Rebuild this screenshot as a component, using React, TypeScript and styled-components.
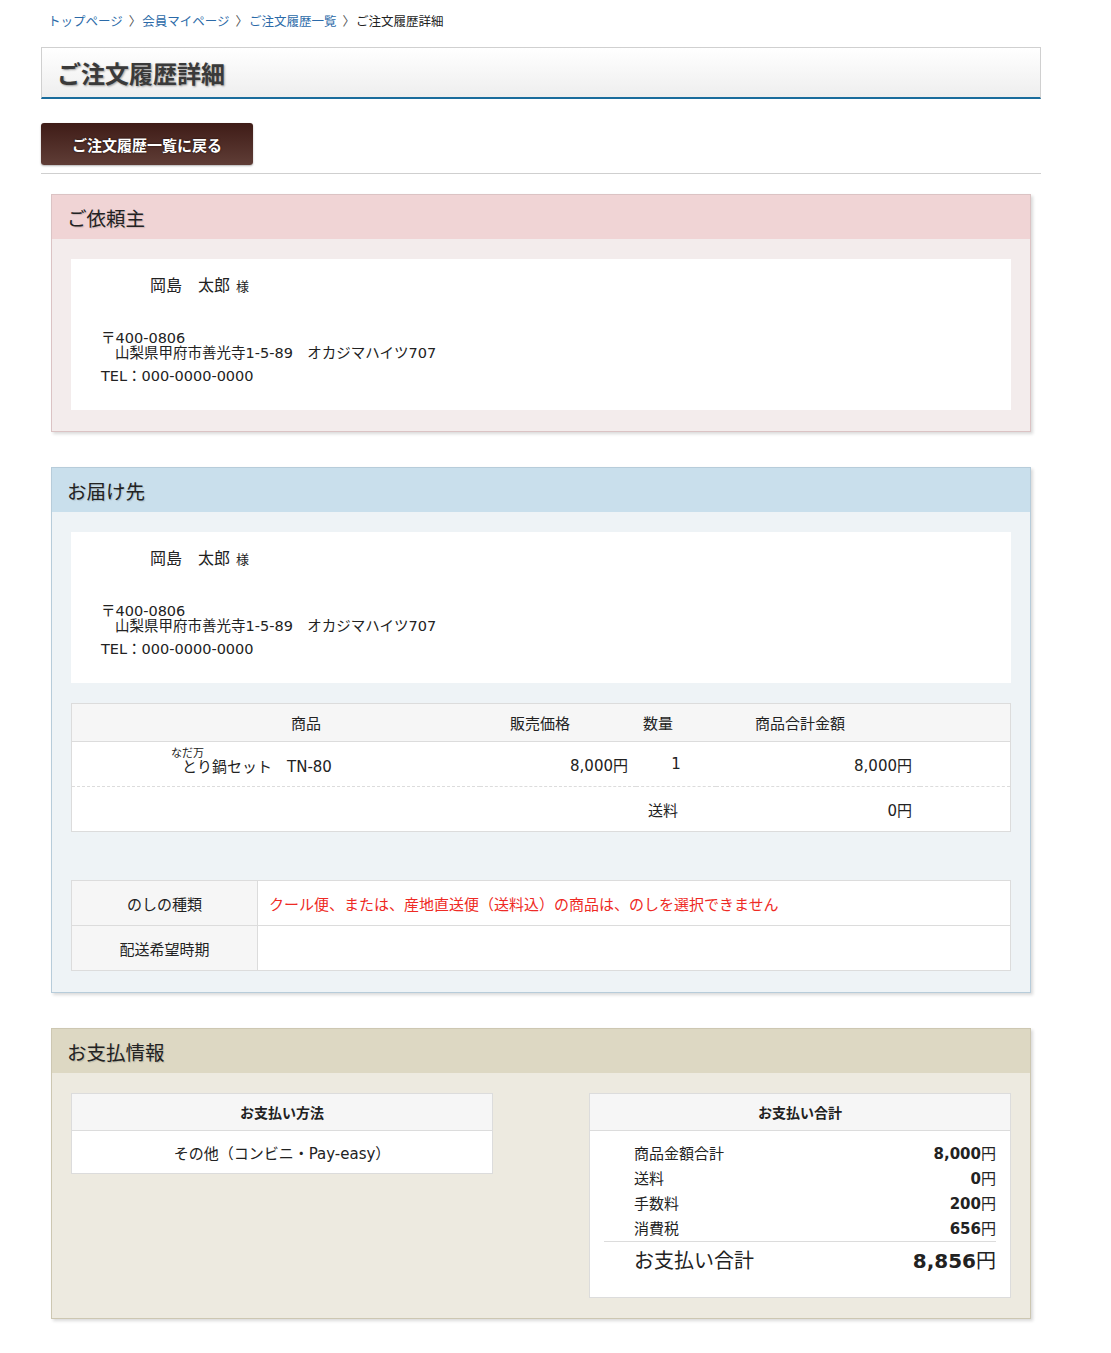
import React from "react"
import styled, { createGlobalStyle } from "styled-components"

const GlobalStyle = createGlobalStyle`
	body {
		margin: 0;
		background: #fff;
		color: #222;
		font-family: "DejaVu Sans", "Noto Sans CJK JP", sans-serif;
	}
`

const Page = styled.div`
	width: 1000px;
	margin-left: 41px;
	padding-bottom: 35px;
`

const Breadcrumb = styled.nav`
	display: flex;
	align-items: center;
	height: 41px;
	padding-left: 7px;
	font-family: "Noto Sans CJK JP", sans-serif;
	font-size: 12.5px;
	line-height: 16px;
	a {
		color: #2b6aa8;
		text-decoration: none;
	}
	span.sep {
		color: #555;
		margin: 0 1px 0 6px;
	}
	span.current {
		color: #222;
	}
`

const TitleBox = styled.h1`
	margin: 6px 0 0;
	height: 49px;
	display: flex;
	align-items: center;
	padding-left: 15px;
	border: 1px solid #d0d0d0;
	border-bottom: 2px solid #1a6c9c;
	background: linear-gradient(#ffffff, #eeeeee);
	font-family: "Noto Sans CJK JP", sans-serif;
	font-size: 24px;
	font-weight: bold;
	color: #3a3a3a;
	text-shadow: 1px 1px 2px rgba(0, 0, 0, 0.35);
`

const BackButton = styled.button`
	margin-top: 24px;
	width: 212px;
	height: 42px;
	border: none;
	border-radius: 3px;
	background: linear-gradient(#3f1c17, #5f3d36);
	color: #fff;
	font-family: "Noto Sans CJK JP", sans-serif;
	font-size: 15px;
	font-weight: bold;
	text-shadow: 0 0 2px rgba(0, 0, 0, 0.8);
	box-shadow: 0 1px 2px rgba(0, 0, 0, 0.3);
	cursor: pointer;
`

const Rule = styled.hr`
	margin: 8px 0 20px;
	border: none;
	border-top: 1px solid #cfcfcf;
`

type Tone = "pink" | "blue" | "tan"
const tones: Record<Tone, { head: string, body: string, border: string }> = {
	pink: { head: "#f0d4d5", body: "#f3ecec", border: "#dbc3c4" },
	blue: { head: "#c9dfec", body: "#eef3f6", border: "#b7ccda" },
	tan: { head: "#ddd8c3", body: "#edeae0", border: "#cdc7b2" },
}

const Section = styled.section<{ $tone: Tone }>`
	margin: 0 10px 35px;
	border: 1px solid ${p => tones[p.$tone].border};
	background: ${p => tones[p.$tone].body};
	box-shadow: 2px 2px 3px rgba(0, 0, 0, 0.15);
	> h2 {
		margin: 0;
		height: 44px;
		display: flex;
		align-items: center;
		padding-left: 15px;
		background: ${p => tones[p.$tone].head};
		font-family: "Noto Sans CJK JP", sans-serif;
		font-size: 19.5px;
		font-weight: normal;
		color: #222;
		text-shadow: 1px 1px 1px rgba(0, 0, 0, 0.15);
	}
`

const SectionBody = styled.div`
	padding: 20px 19px 21px;
	display: flex;
	flex-direction: column;
`

const AddressCard = styled.div`
	background: #fff;
	padding: 17px 30px 24px;
	font-size: 14.5px;
	color: #222;
`

const Name = styled.div`
	padding-left: 49px;
	font-size: 16px;
	line-height: 20px;
	small {
		font-size: 13px;
		margin-left: 6px;
	}
`

const Postal = styled.div`
	margin-top: 34px;
	line-height: 15px;
	div + div {
		padding-left: 14px;
	}
`

const Tel = styled.div`
	margin-top: 5px;
	line-height: 20px;
`

const ItemTable = styled.div`
	margin-top: 20px;
	border: 1px solid #dcdcdc;
	background: #fff;
	display: grid;
	grid-template-columns: 408px 156px 80px 204px 1fr;
	font-size: 15px;
`

const HeadCell = styled.div<{ $shift?: number }>`
	height: 37px;
	display: flex;
	align-items: center;
	justify-content: center;
	background: #f6f6f6;
	border-bottom: 1px solid #dcdcdc;
	padding-left: ${p => Math.max(p.$shift ?? 0, 0)}px;
	padding-right: ${p => Math.max(-(p.$shift ?? 0), 0)}px;
`

const Cell = styled.div<{ $align?: "left" | "center" | "right", $dashed?: boolean, $span?: string, $padRight?: number }>`
	height: 44px;
	display: flex;
	flex-direction: column;
	justify-content: center;
	align-items: ${p => p.$align === "right" ? "flex-end" : p.$align === "center" ? "center" : "flex-start"};
	padding: 0 ${p => p.$padRight ?? 8}px 0 8px;
	border-bottom: ${p => p.$dashed ? "1px dashed #dcdcdc" : "none"};
	grid-column: ${p => p.$span ?? "auto"};
`

const Product = styled.div`
	padding-left: 91px;
	line-height: 15px;
	small {
		display: block;
		font-size: 11px;
		line-height: 12px;
		margin-top: -6px;
	}
	span {
		display: block;
		padding-left: 11px;
		font-size: 15px;
	}
`

const InfoTable = styled.div`
	margin-top: 48px;
	border: 1px solid #dcdcdc;
	display: grid;
	grid-template-columns: 186px 1fr;
	font-size: 15px;
`

const InfoLabel = styled.div<{ $last?: boolean }>`
	height: 44px;
	display: flex;
	align-items: center;
	justify-content: center;
	background: #f6f6f6;
	border-right: 1px solid #dcdcdc;
	border-bottom: ${p => p.$last ? "none" : "1px solid #dcdcdc"};
`

const InfoValue = styled.div<{ $last?: boolean, $warn?: boolean }>`
	height: 44px;
	display: flex;
	align-items: center;
	padding-left: 11px;
	background: #fff;
	color: ${p => p.$warn ? "#ee2a24" : "#222"};
	border-bottom: ${p => p.$last ? "none" : "1px solid #dcdcdc"};
`

const PayRow = styled.div`
	display: flex;
	justify-content: space-between;
	align-items: flex-start;
	margin-bottom: -1px;
`

const PayBox = styled.div`
	width: 420px;
	border: 1px solid #dcdcdc;
	background: #fff;
	> h3 {
		margin: 0;
		height: 36px;
		display: flex;
		align-items: center;
		justify-content: center;
		background: #f6f6f6;
		border-bottom: 1px solid #dcdcdc;
		font-family: "Noto Sans CJK JP", sans-serif;
		font-size: 14px;
		font-weight: bold;
	}
`

const PayMethod = styled.div`
	height: 42px;
	display: flex;
	align-items: center;
	justify-content: center;
	font-size: 15px;
`

const Totals = styled.div`
	padding: 9px 14px 21px;
`

const TotalLine = styled.div`
	display: flex;
	justify-content: space-between;
	align-items: center;
	height: 25px;
	padding-left: 30px;
	font-size: 15px;
	b {
		font-weight: bold;
	}
	b span {
		font-weight: normal;
	}
`

const GrandLine = styled.div`
	display: flex;
	justify-content: space-between;
	align-items: center;
	height: 34px;
	margin-top: 1px;
	padding-left: 30px;
	border-top: 1px solid #dcdcdc;
	font-size: 20px;
	b {
		font-weight: bold;
	}
	b span {
		font-weight: normal;
	}
`

function Address() {
	return <AddressCard>
		<Name>岡島　太郎<small>様</small></Name>
		<Postal>
			<div>〒400-0806</div>
			<div>山梨県甲府市善光寺1-5-89　オカジマハイツ707</div>
		</Postal>
		<Tel>TEL：000-0000-0000</Tel>
	</AddressCard>
}

const totals = [
	["商品金額合計", "8,000"],
	["送料", "0"],
	["手数料", "200"],
	["消費税", "656"],
]

export default function App() {
	return <Page>
		<GlobalStyle />
		<Breadcrumb>
			<a href="#">トップページ</a><span className="sep">〉</span>
			<a href="#">会員マイページ</a><span className="sep">〉</span>
			<a href="#">ご注文履歴一覧</a><span className="sep">〉</span>
			<span className="current">ご注文履歴詳細</span>
		</Breadcrumb>
		<TitleBox>ご注文履歴詳細</TitleBox>
		<BackButton>ご注文履歴一覧に戻る</BackButton>
		<Rule />

		<Section $tone="pink">
			<h2>ご依頼主</h2>
			<SectionBody>
				<Address />
			</SectionBody>
		</Section>

		<Section $tone="blue">
			<h2>お届け先</h2>
			<SectionBody>
				<Address />
				<ItemTable>
					<HeadCell $shift={60}>商品</HeadCell>
					<HeadCell $shift={-36}>販売価格</HeadCell>
					<HeadCell $shift={-36}>数量</HeadCell>
					<HeadCell $shift={-36}>商品合計金額</HeadCell>
					<HeadCell />

					<Cell $dashed>
						<Product><small>なだ万</small><span>とり鍋セット　TN-80</span></Product>
					</Cell>
					<Cell $dashed $align="right">8,000円</Cell>
					<Cell $dashed $align="center">1</Cell>
					<Cell $dashed $align="right">8,000円</Cell>
					<Cell $dashed />

					<Cell $align="right" $span="1 / 4" $padRight={38}>送料</Cell>
					<Cell $align="right">0円</Cell>
					<Cell />
				</ItemTable>
				<InfoTable>
					<InfoLabel>のしの種類</InfoLabel>
					<InfoValue $warn>クール便、または、産地直送便（送料込）の商品は、のしを選択できません</InfoValue>
					<InfoLabel $last>配送希望時期</InfoLabel>
					<InfoValue $last />
				</InfoTable>
			</SectionBody>
		</Section>

		<Section $tone="tan">
			<h2>お支払情報</h2>
			<SectionBody>
				<PayRow>
					<PayBox>
						<h3>お支払い方法</h3>
						<PayMethod>その他（コンビニ・Pay-easy）</PayMethod>
					</PayBox>
					<PayBox>
						<h3>お支払い合計</h3>
						<Totals>
							{totals.map(([label, value]) =>
								<TotalLine key={label}>{label}<b>{value}<span>円</span></b></TotalLine>
							)}
							<GrandLine>お支払い合計<b>8,856<span>円</span></b></GrandLine>
						</Totals>
					</PayBox>
				</PayRow>
			</SectionBody>
		</Section>
	</Page>
}
